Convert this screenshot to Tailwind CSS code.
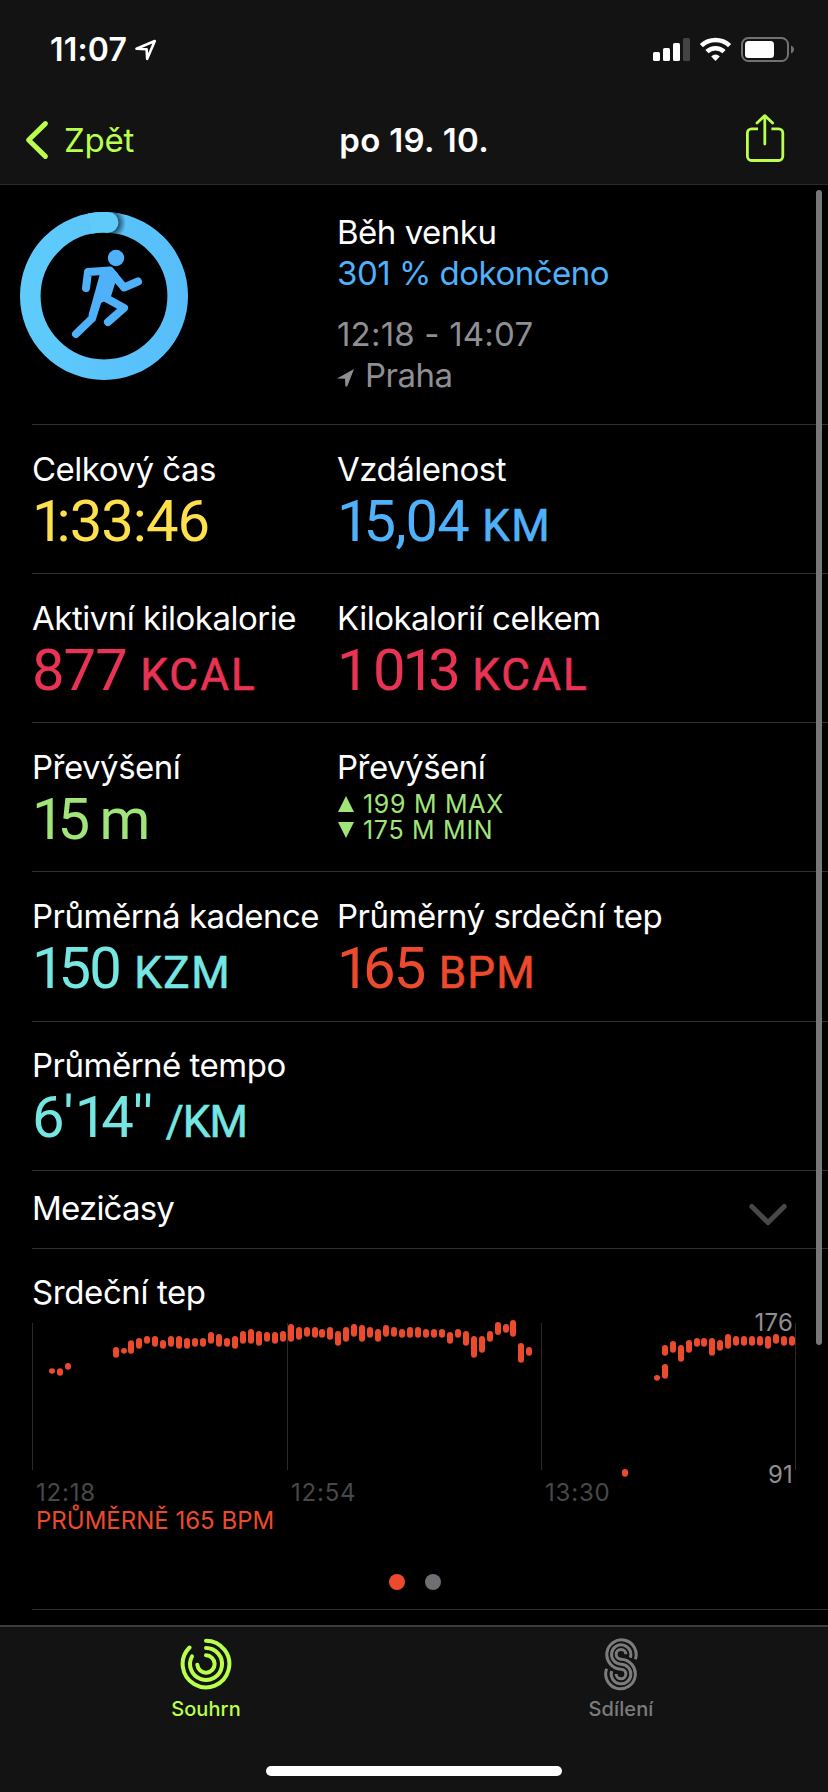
<!DOCTYPE html>
<html lang="cs">
<head>
    <meta charset="UTF-8">
    <meta name="viewport" content="width=device-width, initial-scale=1.0">
    <title>Běh venku</title>
    <script src="https://cdn.jsdelivr.net/npm/@tailwindcss/browser@4"></script>
</head>
<body class="bg-black">
    <div class="relative w-[828px] h-[1792px] overflow-hidden bg-black text-white flex flex-col font-['Inter','Liberation_Sans',sans-serif] text-[33px] leading-[41px] tracking-[-0.5px]">

        <!-- Status bar + navigation -->
        <header class="h-[185px] shrink-0 bg-[#131313] border-b border-[#2b2b2b] flex flex-col">
            <div class="h-[96px] pt-[30px] pl-[50px] pr-[34px] flex items-start justify-between">
                <div class="flex items-start">
                    <span class="w-[85px] text-[32px] leading-[40px] font-semibold tracking-[0.2px] whitespace-nowrap">11:07</span>
                    <svg class="mt-[9px]" width="22" height="22" viewBox="0 0 22 22" fill="none" stroke="#fff" stroke-width="2.6" stroke-linejoin="round"><path d="M1.5 9.8 19.8 2 12.2 19.8 11.6 10.3Z"/></svg>
                </div>
                <svg class="mt-[6px]" width="142" height="28" viewBox="652 36 142 28">
                    <rect x="653" y="52" width="7" height="9" rx="1.6" fill="#fff"/>
                    <rect x="663" y="48" width="7" height="13" rx="1.6" fill="#fff"/>
                    <rect x="673" y="43" width="7" height="18" rx="1.6" fill="#fff"/>
                    <rect x="683" y="38" width="7" height="23" rx="1.6" fill="#444"/>
                    <g fill="none" stroke="#fff" stroke-width="4.6">
                        <path d="M701.4 45.6A20.5 20.5 0 0 1 729.6 45.6"/>
                        <path d="M707 51.6A12.4 12.4 0 0 1 724 51.6"/>
                    </g>
                    <path d="M711.2 56.4A6 6 0 0 1 719.8 56.4L715.5 61Z" fill="#fff"/>
                    <rect x="742" y="38" width="46" height="23" rx="6.5" fill="none" stroke="#717171" stroke-width="2"/>
                    <rect x="745" y="41" width="29" height="17" rx="3.5" fill="#fff"/>
                    <path d="M791 45.5C795 47 795 52 791 53.5Z" fill="#717171"/>
                </svg>
            </div>
            <nav class="flex-1 grid grid-cols-3 items-start pl-[25px] pr-[43px]">
                <a class="flex items-start text-[#b9ff4b]">
                    <svg class="mt-[24px]" width="24" height="40" viewBox="0 0 24 40" fill="none" stroke="#b9ff4b" stroke-width="5" stroke-linecap="round" stroke-linejoin="round"><path d="M20.4 3.6 3.6 20 20.4 36.4"/></svg>
                    <span class="mt-[24px] ml-[15px] tracking-[-0.2px]">Zpět</span>
                </a>
                <h1 class="mt-[24px] pl-[61px] font-semibold tracking-[0.3px] whitespace-nowrap">po 19. 10.</h1>
                <svg class="mt-[17px] justify-self-end" width="40" height="50" viewBox="0 0 40 50" fill="none" stroke="#b9ff4b" stroke-width="2.8" stroke-linecap="round" stroke-linejoin="round"><path d="M13 15.8H6.6A4.2 4.2 0 0 0 2.4 20V43.3A4.2 4.2 0 0 0 6.6 47.5H33.6A4.2 4.2 0 0 0 37.8 43.3V20A4.2 4.2 0 0 0 33.6 15.8H26.4" stroke-linecap="butt"/><path d="M19.8 31V3M12 10 19.8 2.6 27.6 10"/></svg>
            </nav>
        </header>

        <main class="h-[1440px] shrink-0 overflow-hidden">
            <!-- Workout summary -->
            <section class="h-[239px] flex">
                <svg class="mt-[27px] ml-[20px] shrink-0" width="168" height="168" viewBox="20 212 168 168">
                    <defs>
                        <linearGradient id="ring" x1="1" y1="0" x2="0" y2="0"><stop offset="0" stop-color="#57befa"/><stop offset="1" stop-color="#5fcbfb"/></linearGradient>
                        <radialGradient id="shade" gradientUnits="userSpaceOnUse" cx="109" cy="223" r="17"><stop offset=".5" stop-color="#000" stop-opacity=".65"/><stop offset="1" stop-color="#000" stop-opacity="0"/></radialGradient>
                        <clipPath id="band"><path clip-rule="evenodd" d="M104 212a84 84 0 1 0 .01 0ZM104 232.6a63.4 63.4 0 1 1-.01 0Z"/></clipPath>
                    </defs>
                    <circle cx="104" cy="296" r="73.7" fill="none" stroke="url(#ring)" stroke-width="20.6"/>
                    <rect x="108" y="205" width="26" height="38" fill="url(#shade)" clip-path="url(#band)"/>
                    <path d="M90 223.6A73.7 73.7 0 0 1 108 222.4" fill="none" stroke="#5fcbfb" stroke-width="20.6"/>
                    <circle cx="108.2" cy="222.4" r="10.3" fill="#5fcbfb"/>
                    <circle cx="116" cy="258" r="8.2" fill="#50b1fb"/>
                    <g fill="none" stroke="#50b1fb" stroke-width="8" stroke-linecap="round" stroke-linejoin="round">
                        <path d="M86 288 88 272 110 270.5 124 287.5 138 281.5"/>
                        <path d="M76 334 92 318.5 98 299"/>
                        <path d="M104 297 124 308 108 322"/>
                    </g>
                    <path d="M101 270 111 267 118 274 110.5 298 101 303 94.5 320 88.5 315Z" fill="#50b1fb"/>
                </svg>
                <div class="pt-[27px] ml-[149px]">
                    <p>Běh venku</p>
                    <p class="text-[#50b1fb]">301 % dokončeno</p>
                    <p class="mt-[20px] tracking-[0.2px] text-[#8e8e93]">12:18 - 14:07</p>
                    <p class="flex text-[#8e8e93]">
                        <svg class="mt-[14px] mr-[11px]" width="17" height="18" viewBox="0 0 17 18" fill="#8e8e93"><path d="M0 9.4 17 0 10.2 17.6H8.4L8 9.8Z"/></svg>Praha
                    </p>
                </div>
            </section>

            <!-- Metrics -->
            <section class="ml-[32px]">
                <div class="h-[149px] border-t border-[#303030] pt-[24px] grid grid-cols-[305px_1fr]">
                    <div><p>Celkový čas</p><p class="font-['Roboto',sans-serif] text-[58px] leading-[62px] tracking-[-1px] text-[#fde04c]"><span class="tracking-[-8px]">1</span>:33:46</p></div>
                    <div><p>Vzdálenost</p><p class="font-['Roboto',sans-serif] text-[58px] leading-[62px] tracking-[-1px] text-[#50b1fb]"><span class="tracking-[-6px]">1</span>5,04 <span class="text-[44px] tracking-[1.5px] [-webkit-text-stroke:0.6px]">KM</span></p></div>
                </div>
                <div class="h-[149px] border-t border-[#303030] pt-[24px] grid grid-cols-[305px_1fr]">
                    <div><p>Aktivní kilokalorie</p><p class="font-['Roboto',sans-serif] text-[58px] leading-[62px] tracking-[-1px] text-[#e93354]">877 <span class="text-[44px] tracking-[2.2px] [-webkit-text-stroke:0.6px]">KCAL</span></p></div>
                    <div><p>Kilokalorií celkem</p><p class="font-['Roboto',sans-serif] text-[58px] leading-[62px] tracking-[-1px] text-[#e93354]"><span class="tracking-[-5.5px]">1 </span><span class="tracking-[-3px]">0</span><span class="tracking-[-7px]">1</span>3 <span class="-ml-[1px] text-[44px] tracking-[2.2px] [-webkit-text-stroke:0.6px]">KCAL</span></p></div>
                </div>
                <div class="h-[149px] border-t border-[#303030] pt-[24px] grid grid-cols-[305px_1fr]">
                    <div><p>Převýšení</p><p class="font-['Roboto',sans-serif] text-[58px] leading-[62px] tracking-[-2px] text-[#a1e57a]"><span class="tracking-[-7px]">1</span>5 <span class="-ml-[1px]">m</span></p></div>
                    <div>
                        <p>Převýšení</p>
                        <div class="mt-[3px] ml-[1px] text-[25px] leading-[26px] tracking-[0.7px] text-[#a1e57a]">
                            <p class="flex items-center gap-[9px]"><svg width="16" height="16" viewBox="0 0 16 16" fill="#a1e57a"><path d="M8 0 16 16H0Z"/></svg><span>199 M MAX</span></p>
                            <p class="flex items-center gap-[9px]"><svg width="16" height="16" viewBox="0 0 16 16" fill="#a1e57a"><path d="M8 16 16 0H0Z"/></svg><span>175 M MIN</span></p>
                        </div>
                    </div>
                </div>
                <div class="h-[150px] border-t border-[#303030] pt-[24px] grid grid-cols-[305px_1fr]">
                    <div><p>Průměrná kadence</p><p class="font-['Roboto',sans-serif] text-[58px] leading-[62px] tracking-[-2px] text-[#76e6e3]"><span class="tracking-[-6px]">1</span>50 <span class="ml-[2px] text-[44px] tracking-[1.5px] [-webkit-text-stroke:0.6px]">KZM</span></p></div>
                    <div><p>Průměrný srdeční tep</p><p class="font-['Roboto',sans-serif] text-[58px] leading-[62px] tracking-[-2px] text-[#ec4a2d]"><span class="tracking-[-6.5px]">1</span>65 <span class="ml-[2px] text-[44px] tracking-[1.2px] [-webkit-text-stroke:0.6px]">BPM</span></p></div>
                </div>
                <div class="h-[149px] border-t border-[#303030] pt-[23px]">
                    <p>Průměrné tempo</p><p class="font-['Roboto',sans-serif] text-[58px] leading-[62px] tracking-[-1px] text-[#76e6e3]">6<span class="tracking-[1px]">'</span><span class="tracking-[-6px]">1</span>4<span class="tracking-[0px]">'</span>' <span class="text-[44px] [-webkit-text-stroke:0.6px]">/KM</span></p>
                </div>
                <div class="h-[78px] border-t border-[#303030] pt-[17px] pr-[40px] flex justify-between items-start">
                    <p class="tracking-[-0.8px]">Mezičasy</p>
                    <svg class="mt-[14px]" width="40" height="26" viewBox="0 0 40 26" fill="none" stroke="#48484a" stroke-width="5" stroke-linecap="round" stroke-linejoin="round"><path d="M3.8 4.4 20 20.6 36.2 4.4"/></svg>
                </div>
            </section>

            <!-- Heart rate -->
            <section class="ml-[32px] h-[362px] border-y border-[#303030] pt-[23px]">
                <p class="tracking-[-0.4px]">Srdeční tep</p>
                <div class="relative mt-[7px] w-[766px] h-[160px]">
                    <svg width="766" height="160" viewBox="96 60 2298 480">
                        <g id="grid" fill="#2a2a2c">
                            <rect x="96" y="69" width="3" height="441"/><rect x="861" y="69" width="3" height="441"/><rect x="1623" y="69" width="3" height="441"/><rect x="2385" y="69" width="3" height="441"/>
                        </g>
                        <g id="bars" fill="#ec4a2d"></g>
                    </svg>
                    <span class="absolute right-[5px] top-[-12px] text-[24px] leading-[30px] tracking-[0.2px] text-[#8e8e93]">176</span>
                    <span class="absolute right-[5px] top-[140px] text-[24px] leading-[30px] tracking-[0.2px] text-[#8e8e93]">91</span>
                </div>
                <div class="mt-[-1px] pl-[4px] grid grid-cols-[255px_254px_1fr] text-[24px] leading-[28px] tracking-[0.8px] text-[#48484a]">
                    <span>12:18</span><span>12:54</span><span>13:30</span>
                </div>
                <p class="pl-[4px] text-[24px] leading-[28px] tracking-normal text-[#ec4a2d]">PRŮMĚRNĚ 165 BPM</p>
                <div class="mt-[39px] pl-[357px] flex gap-[20px]">
                    <i class="w-[16px] h-[16px] rounded-full bg-[#ec4a2d]"></i>
                    <i class="w-[16px] h-[16px] rounded-full bg-[#6f6f73]"></i>
                </div>
            </section>
        </main>

        <!-- Tab bar -->
        <footer class="flex-1 bg-[#131313] border-t-2 border-[#3c3c3c] flex flex-col items-center justify-between pb-[16px]">
            <div class="w-full grid grid-cols-2 text-[20px] leading-[24px] font-medium tracking-[0.1px]">
                <a class="flex flex-col items-center pt-[11px] pr-[2px] text-[#b9ff4b]">
                    <svg width="52" height="52" viewBox="-78 -78 156 156" fill="none" stroke="#b9ff4b" stroke-width="12" stroke-linecap="round">
                        <path d="M0-70A70 70 0 1 1-49.5-49.5"/>
                        <path d="M0-48A48 48 0 1 1-42-23"/>
                        <path d="M0-26A26 26 0 1 1-26 2"/>
                    </svg>
                    <span class="mt-[7px]">Souhrn</span>
                </a>
                <a class="flex flex-col items-center pt-[10px] text-[#7c7c7c]">
                    <svg width="36" height="54" viewBox="126 111 108 162" fill="none" stroke="#7c7c7c" stroke-width="9">
                        <path d="M223 178A44 44 0 1 0 180 207.5A14.5 14.5 0 1 1 165.5 222"/>
                        <path d="M208 173A29 29 0 1 0 180 192.5A29.5 29.5 0 1 1 152 213"/>
                        <path d="M194.5 163A14.5 14.5 0 1 0 180 177.5A44.5 44.5 0 1 1 137 206"/>
                    </svg>
                    <span class="mt-[6px]">Sdílení</span>
                </a>
            </div>
            <div class="w-[296px] h-[10px] rounded-full bg-white"></div>
        </footer>

        <!-- Scroll indicator -->
        <div class="absolute left-[816px] top-[190px] w-[6px] h-[1155px] rounded-full bg-[#777]"></div>
    </div>

    <script>
        // [x, top, bottom] of every heart rate range
        const ranges = [
            [156,205,221],[180,205,227],[204,189,209],[348,141,173],[372,144,161],[393,121,161],[417,114,146],
            [441,108,131],[465,108,140],[489,120,146],[513,108,140],[537,108,146],[561,114,146],[585,114,140],
            [609,114,140],[633,96,131],[657,102,140],[681,114,140],[705,108,146],[729,93,131],[753,87,131],
            [777,93,137],[801,96,125],[825,96,131],[849,93,125],[873,72,125],[897,81,119],[921,81,110],
            [945,81,113],[966,87,113],[990,81,119],[1014,93,137],[1038,81,125],[1062,72,110],[1086,75,125],
            [1110,81,113],[1134,87,125],[1158,75,110],[1182,81,110],[1206,87,113],[1230,81,113],[1254,81,113],
            [1278,87,113],[1302,87,113],[1326,87,113],[1350,96,131],[1374,87,113],[1398,93,137],[1422,108,173],
            [1446,108,158],[1470,93,125],[1494,66,105],[1518,72,98],[1539,60,110],[1563,129,188],[1587,141,167],
            [1875,507,530],[1971,225,242],[1995,135,167],[1995,192,236],[2019,123,158],[2043,135,185],
            [2067,120,158],[2091,114,140],[2112,114,140],[2136,114,167],[2160,120,152],[2184,102,146],
            [2208,108,137],[2232,108,137],[2256,108,137],[2280,108,137],[2304,108,146],[2328,102,131],
            [2352,108,137],[2376,108,137]
        ];
        document.querySelector('#bars').innerHTML = ranges.map(([x, top, bottom]) =>
            `<rect x="${x - 9}" y="${top}" width="18" height="${bottom - top}" rx="9"/>`
        ).join('');
    </script>
</body>
</html>
